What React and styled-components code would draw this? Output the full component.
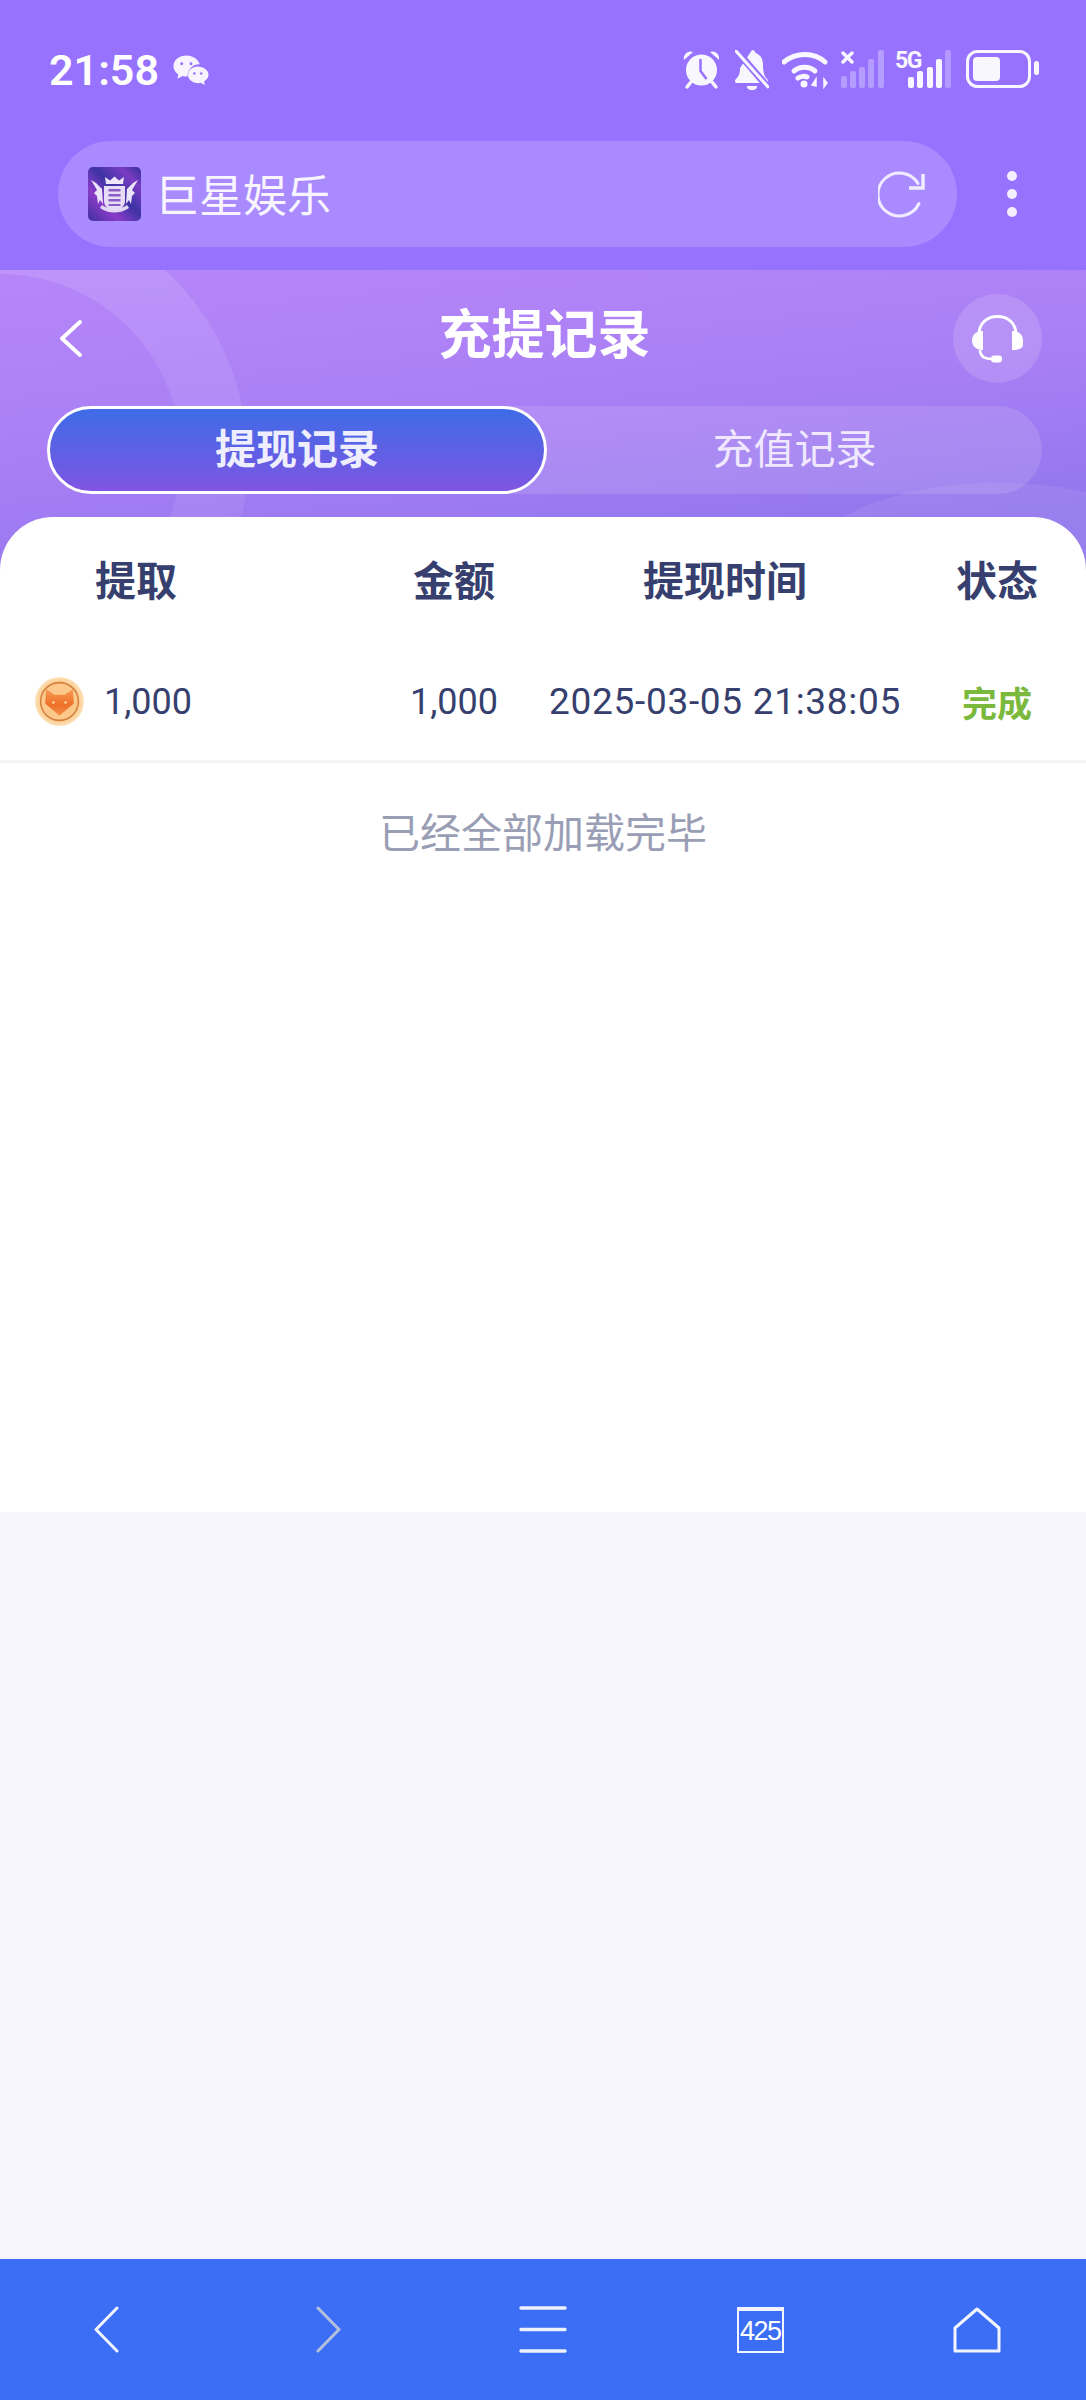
import React from 'react'
import styled, { createGlobalStyle } from 'styled-components'

const SANS = '"Noto Sans CJK SC", "Noto Sans", sans-serif'
const NUM = 'Roboto, "Noto Sans CJK SC", sans-serif'
const ICON = '#f8f6ff'
const CHROME = '#9672ff'

const GlobalStyle = createGlobalStyle`
  html, body {
    margin: 0;
    padding: 0;
    background: #f5f5fb;
    font-family: ${SANS};
  }
  * { box-sizing: border-box; }
`

const Screen = styled.div`
  width: 1086px;
  height: 2400px;
  display: flex;
  flex-direction: column;
  background: #f5f5fb;
  overflow: hidden;
`

const Chrome = styled.div`
  height: 270px;
  background: ${CHROME};
  color: #fff;
  display: flex;
  flex-direction: column;
`

const StatusBar = styled.div`
  height: 141px;
  padding: 48px 46px 0 49px;
  display: flex;
  align-items: flex-start;
  justify-content: space-between;
`

const StatusLeft = styled.div`
  display: flex;
  align-items: center;
  gap: 13px;
`

const Clock = styled.span`
  font: 600 43px/44px ${NUM};
`

const StatusIcons = styled.div`
  display: flex;
  align-items: flex-start;
  padding-top: 2px;
`

const Glyph = styled.svg`
  display: block;
  margin-left: ${(p) => p.$gap || 0}px;
  margin-top: ${(p) => p.$top || 0}px;
  fill: ${ICON};
`

const AddressRow = styled.div`
  display: flex;
  align-items: center;
  padding-left: 58px;
`

const AddressBar = styled.div`
  width: 899px;
  height: 106px;
  padding: 0 31px 0 30px;
  border-radius: 53px;
  background: #a98aff;
  display: flex;
  align-items: center;
  gap: 14px;
`

const SiteName = styled.span`
  flex: 1;
  font-size: 44px;
  line-height: 54px;
  margin-bottom: 3px;
  color: #f8f5ff;
`

const MoreDots = styled.div`
  margin-left: 50px;
  width: 10px;
  display: flex;
  flex-direction: column;
  gap: 8px;
  span {
    width: 10px;
    height: 10px;
    border-radius: 50%;
    background: #f3efff;
  }
`

const PageHead = styled.div`
  position: relative;
  height: 300px;
  padding: 24px 44px 0 47px;
  color: #fff;
  background: linear-gradient(174deg, #b686f9 0%, #aa7ff5 45%, #9076ec 88%);
`

const HeadDecor = styled.svg`
  position: absolute;
  left: 0;
  top: 0;
`

const NavRow = styled.div`
  position: relative;
  height: 88px;
  display: grid;
  grid-template-columns: 1fr auto 1fr;
  align-items: center;
`

const BackButton = styled.div`
  margin-left: 13px;
  display: flex;
`

const Title = styled.div`
  font-size: 53px;
  font-weight: 700;
  line-height: 60px;
  margin-bottom: 16px;
`

const HelpButton = styled.div`
  justify-self: end;
  width: 89px;
  height: 89px;
  border-radius: 50%;
  background: rgba(255, 255, 255, 0.14);
  display: flex;
  align-items: center;
  justify-content: center;
`

const Tabs = styled.div`
  position: relative;
  margin-top: 24px;
  height: 88px;
  display: flex;
  border-radius: 44px;
  background: rgba(255, 255, 255, 0.12);
`

const Tab = styled.div`
  flex: ${(p) => (p.$active ? '0 0 500px' : '1')};
  display: flex;
  align-items: center;
  justify-content: center;
  padding-bottom: 9px;
  font-size: 41px;
  line-height: 50px;
  border-radius: 44px;
  ${(p) =>
    p.$active
      ? `
    font-weight: 700;
    color: #eeeeff;
    border: 3px solid #fff;
    background: linear-gradient(180deg, #3f6ce6 0%, #6a5ce4 70%, #8155e2 100%);
  `
      : 'color: #f0e8ff;'}
`

const Sheet = styled.div`
  position: relative;
  margin-top: -53px;
  height: 995px;
  border-radius: 53px 53px 0 0;
  background: #fff;
`

const Columns = styled.div`
  display: grid;
  grid-template-columns: 366px 176px 366px 178px;
`

const HeadRow = styled(Columns)`
  height: 126px;
  padding-bottom: 5px;
  align-items: center;
  color: #363f6e;
  font-size: 41px;
  font-weight: 700;
`

const RecordRow = styled(Columns)`
  height: 120px;
  align-items: center;
  color: #363f6e;
  border-bottom: 3px solid #f3f3f7;
  font: 400 36px/44px ${NUM};
`

const Cell = styled.div`
  white-space: nowrap;
  display: flex;
  align-items: center;
  justify-content: ${(p) => (p.$left ? 'flex-start' : 'center')};
  padding-left: ${(p) => p.$inset || 0}px;
`

const TimeText = styled.span`
  font-size: 37px;
  letter-spacing: 0.7px;
`

const Coin = styled.svg`
  margin-right: 20px;
`

const Status = styled.span`
  color: #7ab93c;
  font: 700 35px/44px ${SANS};
`

const Loaded = styled.div`
  margin-top: 37px;
  text-align: center;
  color: #9a9eb5;
  font-size: 41px;
  line-height: 60px;
`

const Spacer = styled.div`
  flex: 1;
`

const BottomNav = styled.div`
  height: 141px;
  background: #3b6ef5;
  display: grid;
  grid-template-columns: repeat(5, 1fr);
  align-items: center;
  justify-items: center;
`

const NavArrow = styled.svg`
  margin-left: ${(p) => p.$nudge || 0}px;
  fill: none;
  stroke-width: 3;
  stroke-linecap: round;
  stroke-linejoin: round;
`

const Counter = styled.div`
  width: 47px;
  height: 46px;
  border: 2px solid #f1f4ff;
  border-top-width: 4px;
  color: #fff;
  font: 400 27px/40px "Liberation Sans", sans-serif;
  letter-spacing: -1.500px;
  white-space: nowrap;
  display: flex;
  justify-content: center;
`

const Wechat = () => (
  <svg width="37" height="32" viewBox="0 0 38 32" fill="#f7f4ff">
    <path d="M15 1C7.500 1 1.500 5.700 1.500 12c0 3.600 2 6.600 5 8.600L5.500 25l5.400-2.800c1.400.4 2.800.6 4.100.6h1a12 12 0 0 1 12.500-12.700C26.800 4.700 21.500 1 15 1z" />
    <circle cx="10" cy="9.500" r="1.500" fill={CHROME} />
    <circle cx="19.500" cy="9.500" r="1.500" fill={CHROME} />
    <path d="M26.500 12.500c-5.800 0-10 3.800-10 8.500s4.200 8.500 10 8.500c1 0 2-.1 3-.4l4.300 2.400-.9-3.800c2.800-1.600 4.600-4 4.600-6.700 0-4.700-5-8.500-11-8.500z" />
    <circle cx="23" cy="19.500" r="1.300" fill={CHROME} />
    <circle cx="30" cy="19.500" r="1.300" fill={CHROME} />
  </svg>
)

const AlarmIcon = () => (
  <Glyph width="37" height="40" viewBox="0 0 37 40">
    <circle cx="18.500" cy="20" r="15.500" />
    <path d="M1 10C0 4 5 0 10 2zM36 10c1-6-4-10-9-8z" />
    <path d="M8 32l-4 5M29 32l4 5" stroke={ICON} strokeWidth="3.500" strokeLinecap="round" />
    <path d="M17.500 9v12l6 8" fill="none" stroke={CHROME} strokeWidth="2.500" />
  </Glyph>
)

const MutedBellIcon = () => (
  <Glyph $gap={15} width="34" height="41" viewBox="0 0 34 41">
    <path d="M17 0c2 0 3 1 3.500 3C26 5 28 9 28 15c0 6 1 11 4 14 2 2 1 4-1 4H3c-3 0-4-2-2-4 3-3 4-5 4-11z" />
    <path d="M12 36h10c0 3-2 4-5 4s-5-1-5-4z" />
    <path d="M1 0l31 36" stroke={CHROME} strokeWidth="7" />
    <path d="M1 1l32 36" stroke={ICON} strokeWidth="3" strokeLinecap="round" />
  </Glyph>
)

const WifiIcon = () => (
  <Glyph $gap={13} width="47" height="40" viewBox="0 0 47 40">
    <g fill="none" stroke={ICON} strokeWidth="5" strokeLinecap="round">
      <path d="M2 12c12-10 30-10 41 0" />
      <path d="M12 21c6-5 15-5 21 0" />
      <path d="M16 28c3-2 7-2 9-1" />
    </g>
    <circle cx="22" cy="34" r="3.500" />
    <path d="M34 36v-7l-4 6zM42 29v8l3-4z" stroke={ICON} strokeWidth="1.500" />
  </Glyph>
)

const NoSimSignal = () => (
  <Glyph $gap={12} width="43" height="38" viewBox="0 0 43 38">
    <path d="M2 3l9 9M11 3l-9 9" stroke={ICON} strokeWidth="3.500" strokeLinecap="round" />
    <g fill="#fff" fillOpacity="0.3">
      <rect x="0" y="26" width="6" height="12" rx="2" />
      <rect x="9" y="21" width="6" height="17" rx="2" />
      <rect x="18" y="17" width="6" height="21" rx="2" />
      <rect x="27" y="9" width="6" height="29" rx="2" />
      <rect x="37" y="0" width="6" height="38" rx="2" />
    </g>
  </Glyph>
)

// viewBox starts above zero so the label's line box stays inside the svg
const FiveGSignal = () => (
  <Glyph $gap={11} $top={-10} width="56" height="50" viewBox="0 -10 56 50">
    <text x="0" y="18" fontFamily="Roboto, sans-serif" fontWeight="700" fontSize="23" letterSpacing="-1.500" fill={ICON}>5G</text>
    <rect x="13" y="27" width="6" height="11" rx="2" />
    <rect x="22" y="21" width="6" height="17" rx="2" />
    <rect x="32" y="17" width="6" height="21" rx="2" />
    <rect x="41" y="9" width="6" height="29" rx="2" />
    <rect x="50" y="0" width="6" height="38" fillOpacity="0.3" rx="2" />
  </Glyph>
)

const BatteryIcon = () => (
  <Glyph $gap={15} width="74" height="38" viewBox="0 0 74 38">
    <rect x="1.500" y="1.500" width="62" height="35" rx="10" fill="none" stroke={ICON} strokeWidth="3" />
    <rect x="7" y="7" width="27" height="24" rx="4" />
    <rect x="68" y="11" width="5" height="14" rx="2.500" />
  </Glyph>
)

// crest on the site's tab icon: crown, shield, two griffins, ribbon
const SiteLogo = () => (
  <svg width="53" height="54" viewBox="0 0 53 54">
    <defs>
      <linearGradient id="crestBg" x1="0" y1="1" x2="1" y2="0">
        <stop offset="0" stopColor="#3e2fa0" />
        <stop offset="0.3" stopColor="#8a3cc8" />
        <stop offset="0.55" stopColor="#3d33a4" />
        <stop offset="0.8" stopColor="#7a3cc4" />
        <stop offset="1" stopColor="#34309a" />
      </linearGradient>
    </defs>
    <rect width="53" height="54" rx="5" fill="url(#crestBg)" />
    <path d="M18 17l-1-7 5 3.500 4.500-4 4.500 4 5-3.500-1 7z" fill="#efe6fb" />
    <path d="M16 19h21v15c0 6-6 9-10.500 11C22 43 16 40 16 34z" fill="#e6dcf6" />
    <path d="M20.500 22h12v2.500h-12zM20.500 27h12v2.500h-12zM20.500 32h12v2.500h-12zM20.500 37h12v2h-12z" fill="#8a5cc6" />
    <path d="M3 13l5 3 6 6 1 15-3-4-2 4-1-8-3-3 3-3zM50 13l-5 3-6 6-1 15 3-4 2 4 1-8 3-3-3-3z" fill="#ece4f8" />
    <path d="M12 41c9 6 20 6 29 0l-2-3c-7 5-18 5-25 0z" fill="#e2d8f4" />
  </svg>
)

const Reload = () => (
  <svg width="48" height="48" viewBox="0 0 48 48" fill="none" stroke="#f1ecff" strokeWidth="3">
    <path d="M41 33.500a21.500 21.500 0 1 1-1-20" strokeLinecap="round" />
    <path d="M45 4v14H31" strokeWidth="3.500" />
  </svg>
)

const CoinIcon = () => (
  <Coin width="49" height="49" viewBox="0 0 48 48">
    <defs>
      <radialGradient id="coinBg">
        <stop offset="0.7" stopColor="#fcc98a" />
        <stop offset="0.92" stopColor="#fdd8a6" />
        <stop offset="1" stopColor="#fee6c6" />
      </radialGradient>
      <linearGradient id="foxFill" x1="0" y1="0" x2="0" y2="1">
        <stop offset="0" stopColor="#f79a55" />
        <stop offset="0.6" stopColor="#ee6f28" />
        <stop offset="1" stopColor="#f4924c" />
      </linearGradient>
    </defs>
    <circle cx="24" cy="24" r="24" fill="url(#coinBg)" />
    <circle cx="24" cy="24" r="18.500" fill="none" stroke="#d6803f" strokeWidth="1.500" />
    <path d="M11 12l8 5.500h10l8-5.500 1 14-14 12-14-12z" fill="url(#foxFill)" />
    <circle cx="18" cy="25" r="1.300" fill="#fbd9a0" />
    <circle cx="30" cy="25" r="1.300" fill="#fbd9a0" />
  </Coin>
)

const Headset = () => (
  <svg width="51" height="48" viewBox="0 0 51 48" fill="#fff">
    <path d="M7 20C7 8 15 1.500 25.500 1.500S44 8 44 20" fill="none" stroke="#fff" strokeWidth="3" />
    <path d="M11 16v19C4 35 0 31 0 25.500S4 16 11 16z" />
    <path d="M40 16c7 0 11 4 11 9.500V29c0 4-3 6-11 6z" />
    <path d="M8 35c0 7 5 9 12 9" fill="none" stroke="#fff" strokeWidth="2.500" />
    <rect x="19" y="40.500" width="11" height="7" rx="3" />
  </svg>
)

const BackArrow = () => (
  <svg width="22" height="37" viewBox="0 0 22 37" fill="none" stroke="#fff" strokeWidth="3.800" strokeLinecap="round" strokeLinejoin="round">
    <path d="M20 2L2 18.500 20 35" />
  </svg>
)

const NavMenu = () => (
  <svg width="48" height="47" viewBox="0 0 48 47" stroke="#eef2ff" strokeWidth="3.500" strokeLinecap="round">
    <path d="M2 2h44M2 23.500h44M2 45h44" />
  </svg>
)

const NavHome = () => (
  <svg width="48" height="46" viewBox="0 0 48 46" fill="none" stroke="#f2f5ff" strokeWidth="3" strokeLinejoin="round">
    <path d="M2 44V21L24 2l22 19v23z" />
  </svg>
)

const records = [{ coin: '1,000', amount: '1,000', time: '2025-03-05 21:38:05', status: '完成' }]

const App = () => (
  <>
    <GlobalStyle />
    <Screen>
      <Chrome>
        <StatusBar>
          <StatusLeft>
            <Clock>21:58</Clock>
            <Wechat />
          </StatusLeft>
          <StatusIcons>
            <AlarmIcon />
            <MutedBellIcon />
            <WifiIcon />
            <NoSimSignal />
            <FiveGSignal />
            <BatteryIcon />
          </StatusIcons>
        </StatusBar>
        <AddressRow>
          <AddressBar>
            <SiteLogo />
            <SiteName>巨星娱乐</SiteName>
            <Reload />
          </AddressBar>
          <MoreDots>
            <span />
            <span />
            <span />
          </MoreDots>
        </AddressRow>
      </Chrome>
      <PageHead>
        <HeadDecor width="1086" height="300" viewBox="0 0 1086 300">
          <defs>
            <linearGradient id="ringFade" x1="0" y1="0" x2="0" y2="1">
              <stop offset="0" stopColor="#fff" stopOpacity="0.13" />
              <stop offset="1" stopColor="#fff" stopOpacity="0.03" />
            </linearGradient>
          </defs>
          <path
            fillRule="evenodd"
            fill="url(#ringFade)"
            d="M-270 190a259 259 0 1 0 518 0a259 259 0 1 0-518 0zM-181 185a181 181 0 1 0 362 0a181 181 0 1 0-362 0z"
          />
          <path fill="#fff" fillOpacity="0.07" d="M844 247C880 225 940 213 993 213C1030 213 1060 216 1086 222V300H844z" />
        </HeadDecor>
        <NavRow>
          <BackButton>
            <BackArrow />
          </BackButton>
          <Title>充提记录</Title>
          <HelpButton>
            <Headset />
          </HelpButton>
        </NavRow>
        <Tabs>
          <Tab $active>提现记录</Tab>
          <Tab>充值记录</Tab>
        </Tabs>
      </PageHead>
      <Sheet>
        <HeadRow>
          <Cell $left $inset={95}>提取</Cell>
          <Cell>金额</Cell>
          <Cell>提现时间</Cell>
          <Cell>状态</Cell>
        </HeadRow>
        {records.map((r) => (
          <RecordRow key={r.time}>
            <Cell $left $inset={35}>
              <CoinIcon />
              {r.coin}
            </Cell>
            <Cell>{r.amount}</Cell>
            <Cell>
              <TimeText>{r.time}</TimeText>
            </Cell>
            <Cell>
              <Status>{r.status}</Status>
            </Cell>
          </RecordRow>
        ))}
        <Loaded>已经全部加载完毕</Loaded>
      </Sheet>
      <Spacer />
      <BottomNav>
        <NavArrow $nudge={-5} width="25" height="47" viewBox="0 0 25 47" stroke="#f2f5ff">
          <path d="M23 2L2 23.500 23 45" />
        </NavArrow>
        <NavArrow $nudge={6} width="25" height="47" viewBox="0 0 25 47" stroke="#b6c0dd">
          <path d="M2 2l21 21.500L2 45" />
        </NavArrow>
        <NavMenu />
        <Counter>425</Counter>
        <NavHome />
      </BottomNav>
    </Screen>
  </>
)

export default App
